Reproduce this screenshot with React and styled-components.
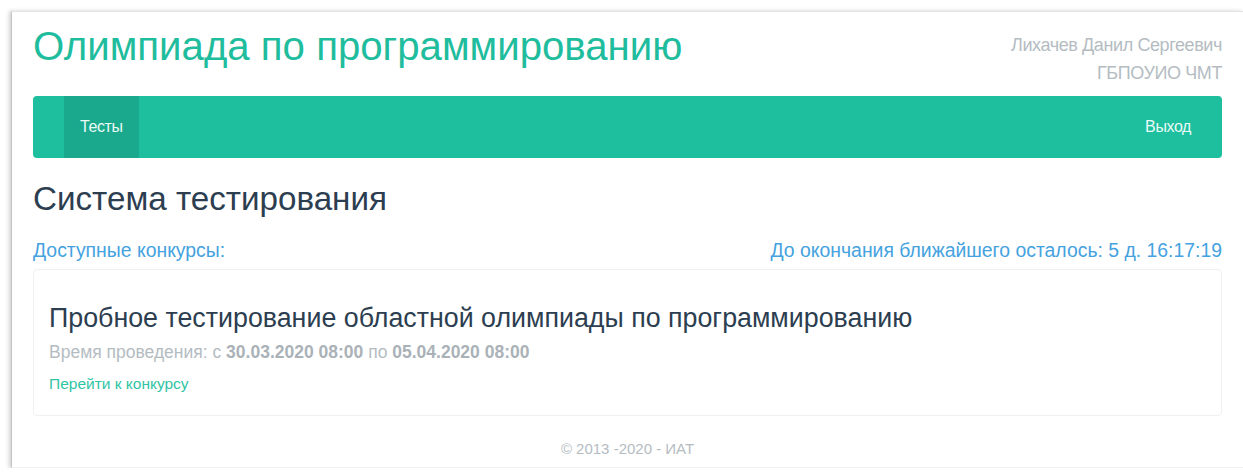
import React from "react";
import styled, { createGlobalStyle } from "styled-components";

const GlobalStyle = createGlobalStyle`
  html, body {
    margin: 0;
    padding: 0;
    background: #fff;
  }

  body {
    font-family: "Liberation Sans", Arial, sans-serif;
    color: #2c3e50;
  }
`;

const contest = {
  title: "Пробное тестирование областной олимпиады по программированию",
  start: "30.03.2020 08:00",
  end: "05.04.2020 08:00",
};

const Frame = styled.div`
  margin: 11px 0 0 11px;
  height: 457px;
  box-sizing: border-box;
  border-top: 1px solid #e4e4e4;
  border-left: 1px solid #c4c4c4;
  border-bottom: 1px solid #f0f0f0;
  box-shadow: -2px 0 4px rgba(0, 0, 0, 0.18);
  padding: 0 21px 0 21px;
`;

const Header = styled.header`
  display: flex;
  justify-content: space-between;
  align-items: flex-start;
  height: 84px;
`;

const SiteTitle = styled.h1`
  margin: 13px 0 0;
  font-size: 40.2px;
  line-height: 44px;
  font-weight: 400;
  color: #1fbd9d;
`;

const UserInfo = styled.div`
  margin-top: 19px;
  text-align: right;
  font-size: 18px;
  line-height: 28px;
  color: #b4bcc2;
  letter-spacing: -0.4px;
`;

const Navbar = styled.nav`
  display: flex;
  justify-content: space-between;
  height: 62px;
  padding: 0 15px 0 31px;
  border-radius: 4px;
  background: #1dbf9f;
`;

const NavItem = styled.a`
  display: flex;
  align-items: center;
  padding: 0 16px;
  font-size: 16px;
  letter-spacing: -0.4px;
  color: #eafaf6;
  text-decoration: none;
  background: ${(p) => (p.$active ? "#1aa98c" : "transparent")};
`;

const PageTitle = styled.h2`
  margin: 23px 0 0;
  font-size: 33.2px;
  line-height: 36px;
  font-weight: 400;
  color: #2c3e50;
`;

const InfoRow = styled.div`
  display: flex;
  justify-content: space-between;
  margin-top: 21px;
  font-size: 19.4px;
  line-height: 24px;
  color: #45a2e0;
`;

const Card = styled.section`
  margin-top: 7px;
  height: 147px;
  box-sizing: border-box;
  padding: 33px 15px 0;
  border: 1px solid #eef1f3;
  border-radius: 4px;
`;

const CardTitle = styled.h3`
  margin: 0;
  font-size: 26.8px;
  line-height: 30px;
  font-weight: 400;
  color: #2c3e50;
`;

const Period = styled.p`
  margin: 7px 0 0;
  font-size: 17.5px;
  line-height: 24px;
  color: #b4bcc2;

  b {
    color: #aab2b8;
  }
`;

const ContestLink = styled.a`
  display: inline-block;
  margin-top: 9px;
  font-size: 15.5px;
  line-height: 21px;
  color: #2fc4a4;
  text-decoration: none;
`;

const Footer = styled.footer`
  margin-top: 23px;
  text-align: center;
  font-size: 15px;
  line-height: 20px;
  color: #b4bcc2;
`;

export default function App() {
  return (
    <>
      <GlobalStyle />
      <Frame>
        <Header>
          <SiteTitle>Олимпиада по программированию</SiteTitle>
          <UserInfo>
            <div>Лихачев Данил Сергеевич</div>
            <div>ГБПОУИО ЧМТ</div>
          </UserInfo>
        </Header>

        <Navbar>
          <NavItem href="#" $active>
            Тесты
          </NavItem>
          <NavItem href="#">Выход</NavItem>
        </Navbar>

        <PageTitle>Система тестирования</PageTitle>

        <InfoRow>
          <span>Доступные конкурсы:</span>
          <span>До окончания ближайшего осталось: 5 д. 16:17:19</span>
        </InfoRow>

        <Card>
          <CardTitle>{contest.title}</CardTitle>
          <Period>
            Время проведения: с <b>{contest.start}</b> по <b>{contest.end}</b>
          </Period>
          <ContestLink href="#">Перейти к конкурсу</ContestLink>
        </Card>

        <Footer>© 2013 -2020 - ИАТ</Footer>
      </Frame>
    </>
  );
}
